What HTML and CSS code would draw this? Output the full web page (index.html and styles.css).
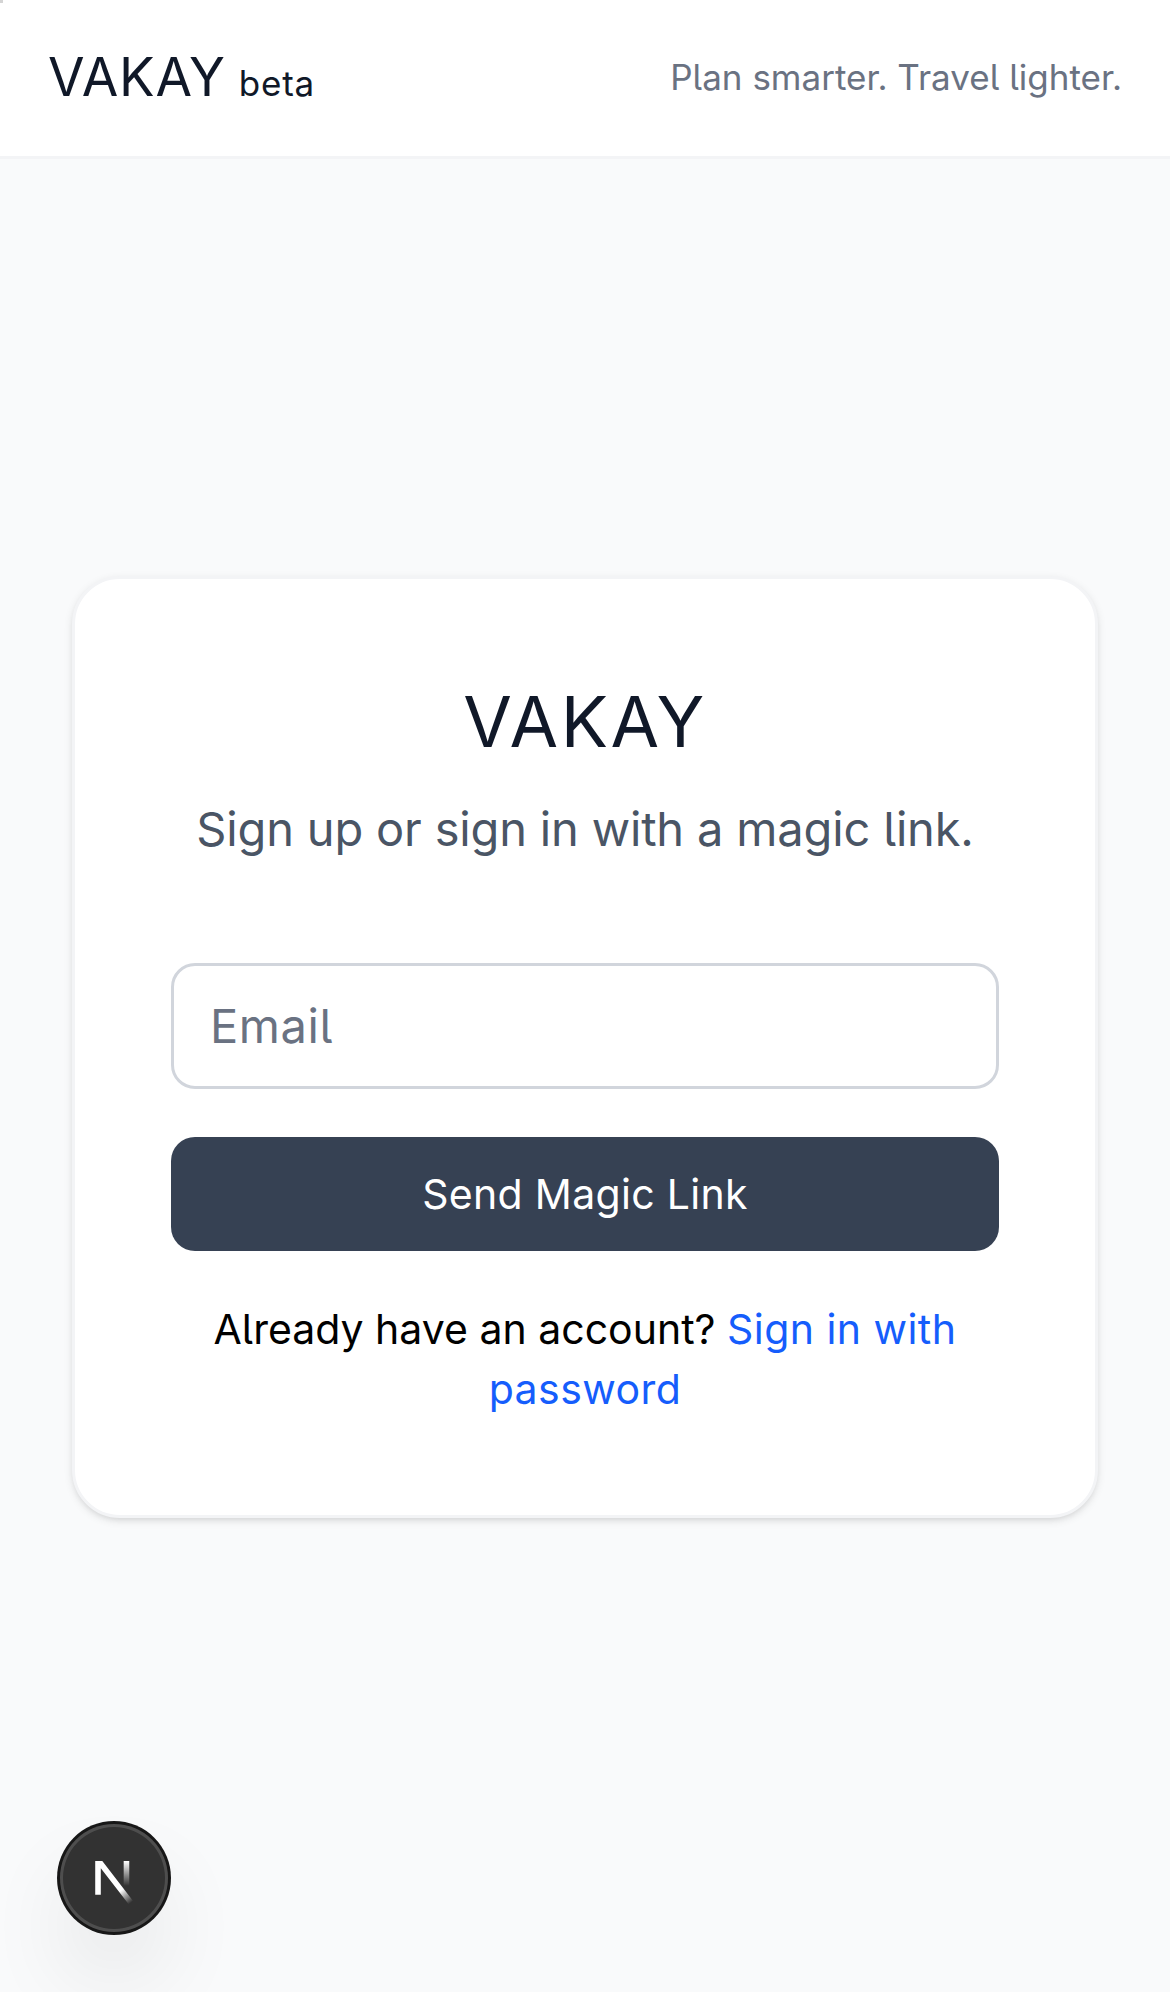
FILE: index.html
```html
<!DOCTYPE html>
<html lang="en">
<head>
<meta charset="utf-8">
<meta name="viewport" content="width=device-width, initial-scale=1">
<title>VAKAY</title>
<link rel="stylesheet" href="styles.css">
</head>
<body class="page">
<header class="header">
  <div class="brand"><span class="brand-name">VAKAY</span><span class="brand-tag">beta</span></div>
  <p class="tagline">Plan smarter. Travel lighter.</p>
</header>
<main class="main">
  <section class="card">
    <h1 class="title">VAKAY</h1>
    <p class="subtitle">Sign up or sign in with a magic link.</p>
    <form class="form">
      <input class="field" type="email" placeholder="Email" aria-label="Email">
      <button class="submit" type="button">Send Magic Link</button>
    </form>
    <p class="alt">Already have an account? <a class="link" href="#">Sign in with password</a></p>
  </section>
</main>
<span class="corner"></span>
<button class="dev-badge" type="button" aria-label="Open dev tools">
  <svg class="dev-logo" viewBox="0 0 40 40" fill="none">
    <defs>
      <linearGradient id="diagonal" gradientUnits="userSpaceOnUse" x1="9.956" y1="11.123" x2="15.478" y2="17.967">
        <stop stop-color="#fff"/><stop offset=".604" stop-color="#fff" stop-opacity="0"/><stop offset="1" stop-color="#fff" stop-opacity="0"/>
      </linearGradient>
      <linearGradient id="bar" gradientUnits="userSpaceOnUse" x1="11.822" y1="1.4" x2="11.791" y2="9.625">
        <stop stop-color="#fff"/><stop offset="1" stop-color="#fff" stop-opacity="0"/>
      </linearGradient>
      <clipPath id="flat-top"><rect x="0" y="1.33" width="16" height="17"/></clipPath>
    </defs>
    <g transform="translate(12.33 13)" stroke-width="1.86" clip-path="url(#flat-top)">
      <path d="M13.3 15.2 2.34 1v11.6" stroke="url(#diagonal)"/>
      <path d="M11.825 1v12.1" stroke="url(#bar)"/>
    </g>
  </svg>
</button>
</body>
</html>
```
FILE: styles.css
```css
* { box-sizing: border-box; margin: 0; }
.page { display: flex; flex-direction: column; min-height: 1992px; background: #f9fafb; font-family: Inter, sans-serif; font-feature-settings: "cv05"; color: #000; }
.header { display: flex; justify-content: space-between; align-items: center; height: 159px; padding: 0 48px; background: #fff; border-bottom: 3px solid #f3f4f6; }
.brand { display: flex; align-items: baseline; gap: 13px; padding-bottom: 2px; color: #101828; }
.brand-name { font-size: 53px; font-weight: 370; letter-spacing: .8px; }
.brand-tag { font-size: 35px; font-weight: 380; letter-spacing: .8px; }
.tagline { padding-bottom: 2px; font-size: 35px; color: #6a7282; }
.main { flex: 1; display: flex; align-items: center; justify-content: center; padding: 0 72px 57px; }
.card { flex: 1; height: 942px; padding: 95px 96px 96px; background: #fff; border: 3px solid #f3f4f6; border-radius: 48px; text-align: center; box-shadow: 0 3px 9px rgba(0,0,0,.1), 0 3px 6px -3px rgba(0,0,0,.1); }
.title { font-size: 70.5px; font-weight: 370; line-height: 96px; letter-spacing: 2.5px; color: #101828; }
.subtitle { margin-top: 23px; font-size: 47px; line-height: 72px; letter-spacing: -.17px; color: #4a5565; }
.form { display: flex; flex-direction: column; gap: 48px; margin-top: 98px; }
.field { height: 126px; padding: 0 36px 2px; border: 3px solid #d1d5dc; border-radius: 24px; font: inherit; font-size: 47px; background: #fff; letter-spacing: .6px; }
.field::placeholder { color: #6a7282; opacity: 1; }
.submit { height: 114px; border: 0; border-radius: 24px; background: #364153; color: #fff; font-family: inherit; font-size: 41px; font-weight: 440; letter-spacing: .3px; }
.alt { margin-top: 48px; font-size: 41px; line-height: 60px; }
.link { color: #155dfc; text-decoration: none; letter-spacing: .45px; }
.corner { position: absolute; top: 0; left: 0; width: 3px; height: 3px; background: #d4d4d4; }
.dev-badge { position: fixed; left: 60px; bottom: 60px; display: flex; align-items: center; justify-content: center; width: 108px; height: 108px; padding: 0; border: 0; border-radius: 50%; background: #323232; box-shadow: 0 0 0 3px #171717, inset 0 0 0 3px rgba(255,255,255,.14), 0 48px 96px -24px rgba(0,0,0,.24); }
.dev-logo { flex: none; width: 120px; height: 120px; }
```
